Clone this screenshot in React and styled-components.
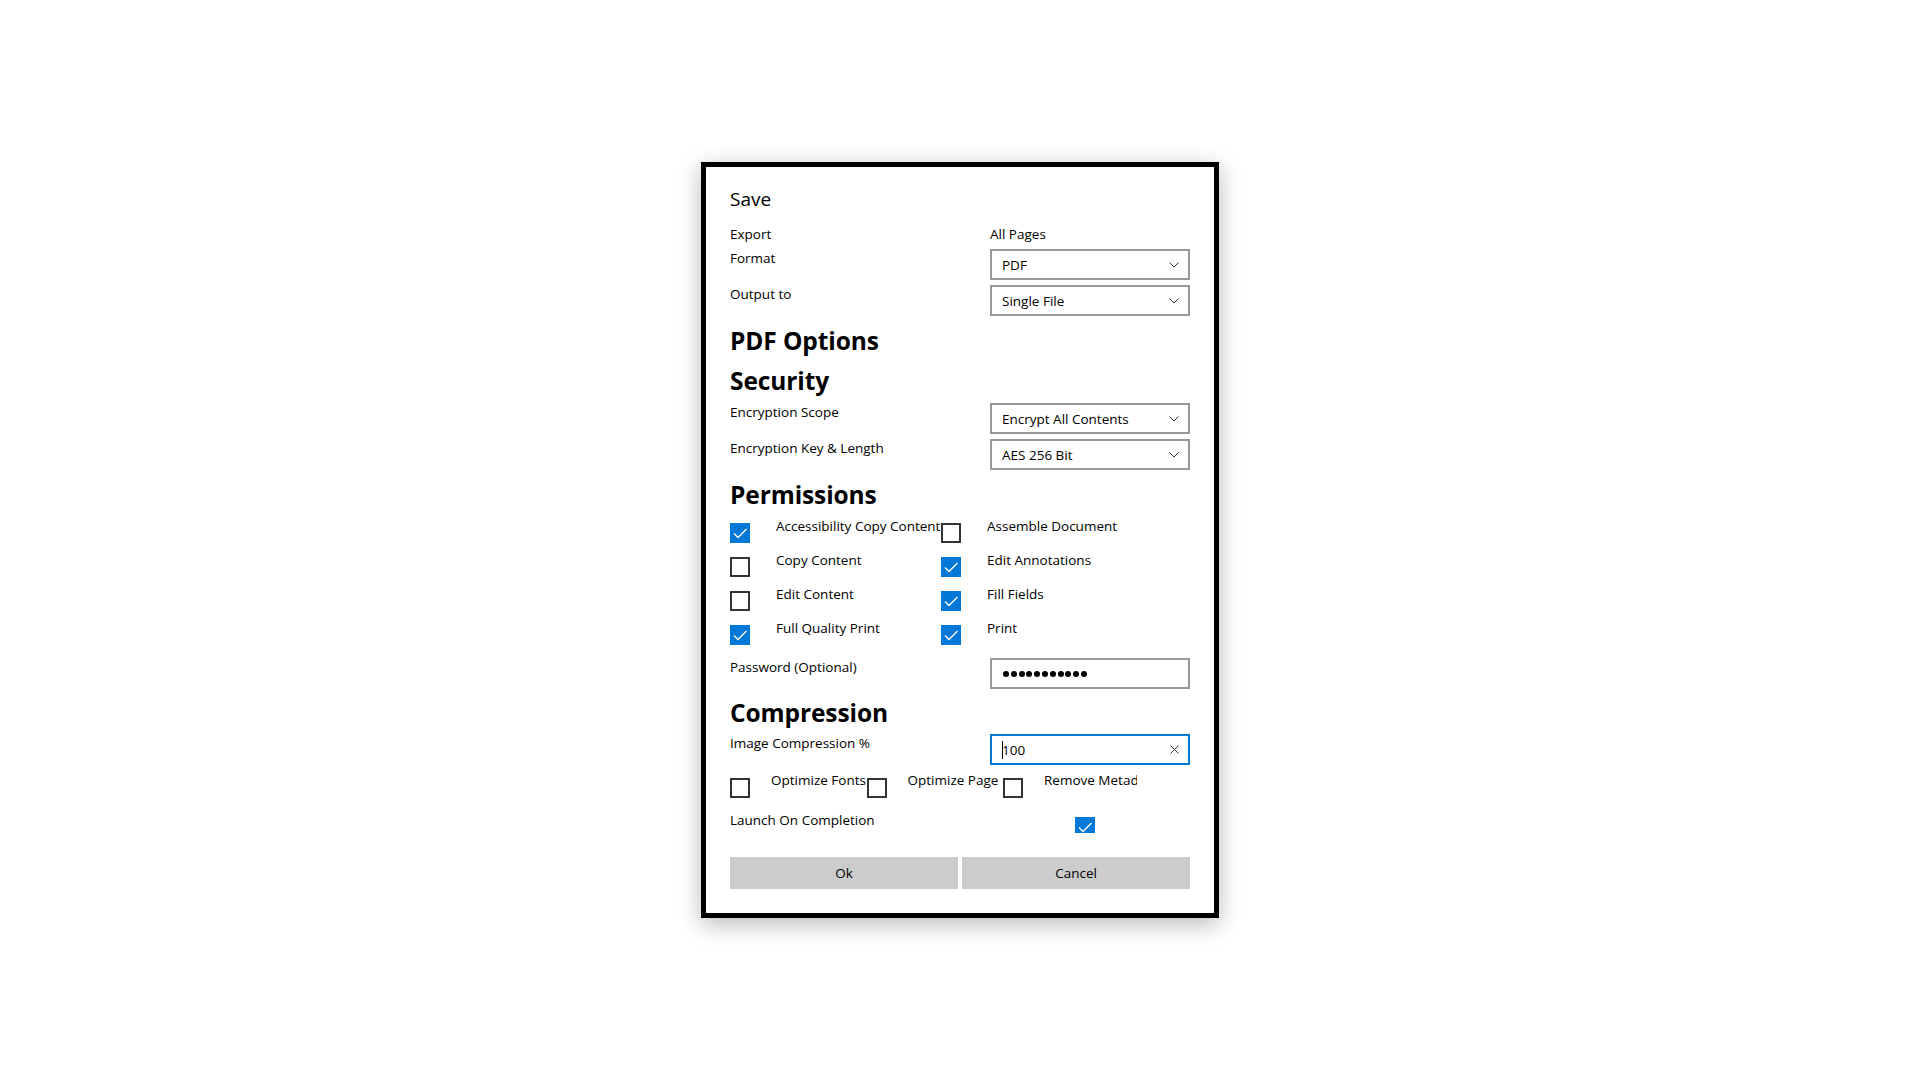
import styled, { createGlobalStyle } from 'styled-components';

const GlobalStyle = createGlobalStyle`
  html, body {
    margin: 0;
    padding: 0;
    background: #ffffff;
  }
  body {
    font-family: "Open Sans", "Noto Sans", sans-serif;
    color: #000;
  }
`;

const Page = styled.div`
  width: 100vw;
  height: 100vh;
  display: flex;
  align-items: center;
  justify-content: center;
`;

const Dialog = styled.div`
  width: 518px;
  box-sizing: border-box;
  border: 5px solid #000;
  background: #fff;
  padding: 18px 24px 24px;
  box-shadow: 0 6px 22px rgba(0, 0, 0, 0.28);
  display: flex;
  flex-direction: column;
`;

const Title = styled.div`
  font-size: 19px;
  line-height: 28px;
  height: 28px;
`;

const Heading = styled.div`
  margin-top: ${p => p.$mt || 0}px;
  font-size: 24.5px;
  font-weight: 700;
  line-height: 36px;
  height: 36px;
  letter-spacing: -0.1px;
`;

const FieldRow = styled.div`
  margin-top: ${p => p.$mt || 0}px;
  display: grid;
  grid-template-columns: 260px 200px;
  align-items: start;
`;

const Label = styled.div`
  font-size: 13.5px;
  line-height: 16px;
  white-space: nowrap;
`;

const FieldLabel = styled(Label)`
  line-height: 19px;
`;

const InputBox = styled.div`
  height: 31px;
  box-sizing: border-box;
  border: 2px solid ${p => (p.$focused ? '#0078d7' : '#999999')};
  background: #fff;
  padding: 0 9px 0 10px;
  display: flex;
  align-items: center;
  justify-content: space-between;
  font-size: 13.5px;
  line-height: 16px;
`;

const Chevron = () => (
  <svg width="10" height="6" viewBox="0 0 10 6">
    <path d="M0.5 0.5 L5 5 L9.5 0.5" fill="none" stroke="#333" strokeWidth="1" />
  </svg>
);

const ClearIcon = () => (
  <svg width="9" height="9" viewBox="0 0 9 9">
    <path d="M0.5 0.5 L8.5 8.5 M8.5 0.5 L0.5 8.5" fill="none" stroke="#333" strokeWidth="1" />
  </svg>
);

const Caret = styled.span`
  display: inline-block;
  width: 1px;
  height: 18px;
  background: #000;
  vertical-align: middle;
  margin-right: -1px;
`;

const InputText = styled.span`
  display: inline-flex;
  align-items: center;
`;

const Dots = styled.div`
  display: flex;
  gap: 1.8px;
  padding-left: 1px;
`;

const Dot = styled.span`
  width: 6px;
  height: 6px;
  border-radius: 50%;
  background: #000;
`;

const CheckGrid = styled.div`
  margin-top: ${p => p.$mt || 0}px;
  display: grid;
  grid-template-columns: 211px 1fr;
  grid-auto-rows: 34px;
`;

const CheckItem = styled.div`
  display: flex;
  align-items: flex-start;
  min-width: 0;
  overflow: ${p => (p.$clip ? 'hidden' : 'visible')};
`;

const Box = styled.span`
  flex-shrink: 0;
  width: 20px;
  height: 20px;
  box-sizing: border-box;
  margin-top: ${p => p.$top}px;
  margin-left: ${p => p.$left || 0}px;
  border: ${p => (p.$checked ? 'none' : '2px solid #333333')};
  background: ${p => (p.$checked ? '#0078d7' : '#ffffff')};
  display: flex;
`;

const ItemLabel = styled(Label)`
  margin-left: ${p => p.$gap}px;
`;

const OptionRow = styled.div`
  margin-top: ${p => p.$mt || 0}px;
  display: grid;
  grid-template-columns: repeat(3, 134px);
  column-gap: 2.5px;
  height: 34px;
`;

const LaunchRow = styled(FieldRow)`
  height: 22px;
  overflow: hidden;
`;

const Buttons = styled.div`
  margin-top: ${p => p.$mt || 0}px;
  display: grid;
  grid-template-columns: 1fr 1fr;
  column-gap: 4px;
`;

const Button = styled.button`
  height: 32px;
  border: none;
  background: #cccccc;
  color: #000;
  font-family: "Open Sans", "Noto Sans", sans-serif;
  font-size: 13.5px;
  padding: 0;
  cursor: pointer;
`;

const Check = ({ checked, top = 5, left = 0 }) => (
  <Box $checked={checked} $top={top} $left={left}>
    {checked && (
      <svg width="20" height="20" viewBox="0 0 20 20">
        <path d="M4 10.5 L8 14.5 L16.5 6" fill="none" stroke="#fff" strokeWidth="1.3" />
      </svg>
    )}
  </Box>
);

const Select = ({ value }) => (
  <InputBox>
    <span>{value}</span>
    <Chevron />
  </InputBox>
);

const permissions = [
  ['Accessibility Copy Content', true],
  ['Assemble Document', false],
  ['Copy Content', false],
  ['Edit Annotations', true],
  ['Edit Content', false],
  ['Fill Fields', true],
  ['Full Quality Print', true],
  ['Print', true],
];

const options = ['Optimize Fonts', 'Optimize Page', 'Remove Metadata'];

export default function App() {
  return (
    <>
      <GlobalStyle />
      <Page>
        <Dialog>
          <Title>Save</Title>

          <FieldRow $mt={12}>
            <FieldLabel>Export</FieldLabel>
            <FieldLabel>All Pages</FieldLabel>
          </FieldRow>
          <FieldRow $mt={5}>
            <FieldLabel>Format</FieldLabel>
            <Select value="PDF" />
          </FieldRow>
          <FieldRow $mt={5}>
            <FieldLabel>Output to</FieldLabel>
            <Select value="Single File" />
          </FieldRow>

          <Heading $mt={7}>PDF Options</Heading>
          <Heading $mt={4}>Security</Heading>
          <FieldRow $mt={4}>
            <FieldLabel>Encryption Scope</FieldLabel>
            <Select value="Encrypt All Contents" />
          </FieldRow>
          <FieldRow $mt={5}>
            <FieldLabel>Encryption Key &amp; Length</FieldLabel>
            <Select value="AES 256 Bit" />
          </FieldRow>

          <Heading $mt={7}>Permissions</Heading>
          <CheckGrid $mt={5}>
            {permissions.map(([name, checked]) => (
              <CheckItem key={name}>
                <Check checked={checked} />
                <ItemLabel $gap={26}>{name}</ItemLabel>
              </CheckItem>
            ))}
          </CheckGrid>
          <FieldRow $mt={4}>
            <FieldLabel>Password (Optional)</FieldLabel>
            <InputBox>
              <Dots>
                {Array.from({ length: 11 }).map((_, i) => (
                  <Dot key={i} />
                ))}
              </Dots>
            </InputBox>
          </FieldRow>

          <Heading $mt={6}>Compression</Heading>
          <FieldRow $mt={3}>
            <FieldLabel>Image Compression %</FieldLabel>
            <InputBox $focused>
              <InputText>
                <Caret />
                100
              </InputText>
              <ClearIcon />
            </InputBox>
          </FieldRow>
          <OptionRow $mt={7}>
            {options.map((name, i) => (
              <CheckItem key={name} $clip={i === options.length - 1}>
                <Check checked={false} top={6} />
                <ItemLabel $gap={21}>{name}</ItemLabel>
              </CheckItem>
            ))}
          </OptionRow>
          <LaunchRow $mt={5}>
            <FieldLabel>Launch On Completion</FieldLabel>
            <CheckItem>
              <Check checked top={6} left={85} />
            </CheckItem>
          </LaunchRow>

          <Buttons $mt={24}>
            <Button>Ok</Button>
            <Button>Cancel</Button>
          </Buttons>
        </Dialog>
      </Page>
    </>
  );
}
